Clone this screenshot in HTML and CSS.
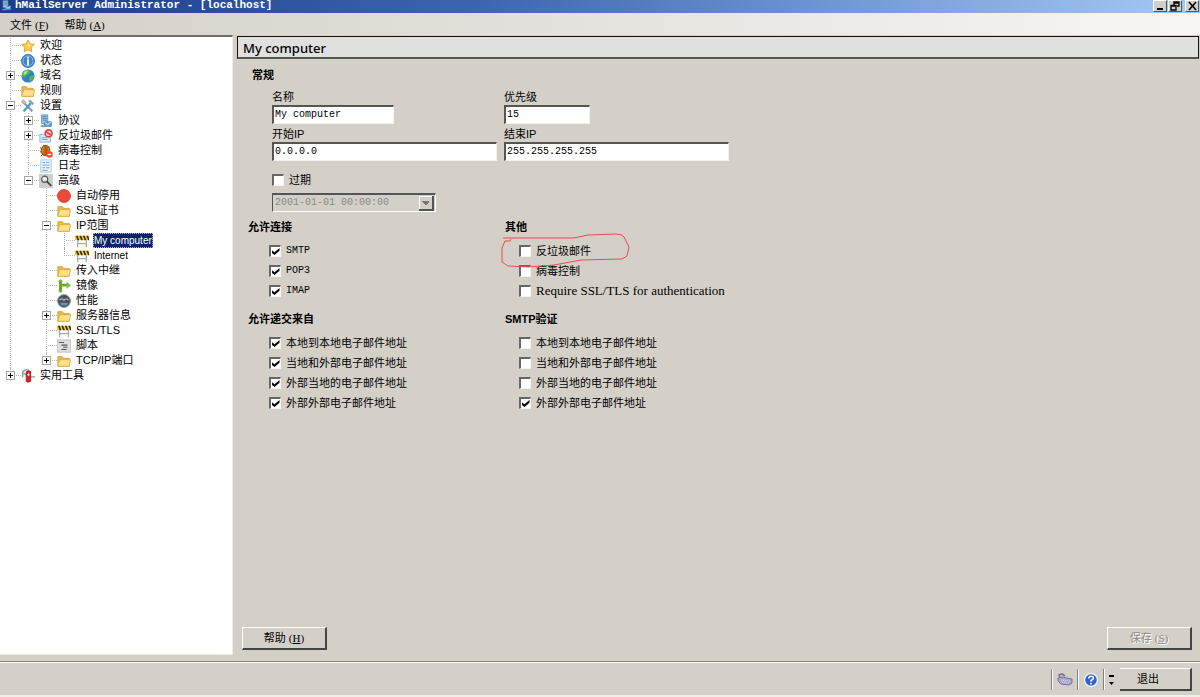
FILE: index.html
```html
<!DOCTYPE html>
<html lang="zh-CN">
<head>
<meta charset="utf-8">
<title>hMailServer Administrator - [localhost]</title>
<link rel="stylesheet" href="styles.css">
</head>
<body>
<svg class="sprite" aria-hidden="true">
  <symbol id="star" viewBox="0 0 16 16"><path d="M8 1l2.200 4.600 5 .6-3.700 3.500 1 5L8 12.200l-4.500 2.500 1-5L.8 6.200l5-.6z" fill="#fbd04e" stroke="#dd9a2c"/><path d="M8 3.500l1.200 3 3 .5-4 1z" fill="#fff0a8"/></symbol>
  <symbol id="info" viewBox="0 0 16 16"><circle cx="8" cy="8" r="7.400" fill="#3d86cb" stroke="#2a68ab"/><circle cx="8" cy="8" r="5.800" fill="none" stroke="#a8d0f2" stroke-width=".8"/><path d="M7 3h2v2H7zM7 6h2v7H7z" fill="#fff"/></symbol>
  <symbol id="globe" viewBox="0 0 16 16"><circle cx="8" cy="8" r="7.500" fill="#2d7fd0"/><path d="M2 4Q5 0 9 1l2 2-2 3-3 1-1 3-3-1-1-3zM10 8l4-1 1 2-2 4-3 1-1-3z" fill="#55b64a"/><path d="M3 4q3-3 5-2L6 5 3 7z" fill="#b5e58c"/></symbol>
  <symbol id="folder" viewBox="0 0 16 16"><path d="M1 3h5l1.500 2H14v9H1z" fill="#e9b849" stroke="#d3a23c"/><path d="M3 6.500h12.500L14 14H1z" fill="#ffe08a" stroke="#dcae45"/></symbol>
  <symbol id="tools" viewBox="0 0 16 16"><path d="M3 4l10 10" stroke="#8b98a4" stroke-width="2.400"/><path d="M1 2l2-1 3 3-2 2-3-2z" fill="#b9c3cc" stroke="#7f8d99" stroke-width=".6"/><path d="M12 4L3 14" stroke="#4b9bdc" stroke-width="2.800"/><path d="M8 2l3-1 4 4-2 2-2-2z" fill="#8fa0ad"/></symbol>
  <symbol id="server" viewBox="0 0 16 16"><path d="M3 1h7v10H3z" fill="#a9cce8" stroke="#5d8fb9"/><path d="M4 3h5M4 5h5M4 7h5" stroke="#4179aa"/><path d="M6 9h8v5H6z" fill="#6aa7da" stroke="#3f79b0"/><path d="M6 9l4 3 4-3" fill="none" stroke="#e7f4ff"/><path d="M2 14h5" stroke="#7b97ad" stroke-width="2"/></symbol>
  <symbol id="spam" viewBox="0 0 16 16"><path d="M1 6h12v9H1z" fill="#d9ecf9" stroke="#7ab0d8"/><path d="M3 10h6M3 12h7" stroke="#6aa5d4"/><circle cx="11" cy="5" r="4" fill="#f6c9c4" stroke="#d9473f" stroke-width="1.800"/><path d="M8 3l6 4" stroke="#d9473f" stroke-width="1.800"/></symbol>
  <symbol id="virus" viewBox="0 0 16 16"><path d="M1 4l3 2M1 9h3M2 14l3-3M12 3l-2 2M5 1l1 3" stroke="#6d3a12"/><ellipse cx="7.500" cy="7.500" rx="5" ry="6" fill="#d5791d" stroke="#7e430f"/><path d="M7 2v11M9 3v9" stroke="#86420f"/><circle cx="12" cy="12" r="3.700" fill="#e5502b"/><path d="M10 12h4" stroke="#fff" stroke-width="1.500"/></symbol>
  <symbol id="log" viewBox="0 0 16 16"><path d="M2 1h12v14H2z" fill="#eaf5fd" stroke="#a3c9e6"/><path d="M4 4h3M8 4h4M4 7h8M4 10h3M8 10h4M4 13h6" stroke="#5c9fd6"/></symbol>
  <symbol id="search" viewBox="0 0 16 16"><path d="M0 0h16v16H0z" fill="#cfcfcf"/><circle cx="6.500" cy="6" r="3.500" fill="#e9e9e9" stroke="#555" stroke-width="1.300"/><path d="M9 8.500l5 5" stroke="#444" stroke-width="2"/></symbol>
  <symbol id="stop" viewBox="0 0 16 16"><circle cx="8" cy="8" r="7.400" fill="#ee4a38" stroke="#d33b2c"/></symbol>
  <symbol id="barrier" viewBox="0 0 16 16"><path d="M3 7v8M13 7v8M3 11h10" stroke="#aaa" stroke-width="1.500"/><path d="M0 2h16v5H0z" fill="#f4c430"/><path d="M1 2h2l2 5H3zM5 2h2l2 5H7zM9 2h2l2 5h-2zM13 2h2l1 3v2h-1z" fill="#332d20"/></symbol>
  <symbol id="mirror" viewBox="0 0 16 16"><path d="M4 1v14M4 7h8" stroke="#69a72a" stroke-width="3.400"/><path d="M11 3l5 4-5 4zM1 3l3-3 3 3zM1 13l3 3 3-3z" fill="#80bf38"/></symbol>
  <symbol id="gauge" viewBox="0 0 16 16"><circle cx="8" cy="8" r="7.300" fill="#46515a" stroke="#8d989f"/><path d="M3 7a3 3 0 0 1 5 0 3 3 0 0 1 5 0" fill="none" stroke="#a9c7dc" stroke-width="1.300"/><path d="M5 7l1-3M10 7l2-3" stroke="#e66a51"/><path d="M3 10h10l-2 3H5z" fill="#5d93bd"/></symbol>
  <symbol id="script" viewBox="0 0 16 16"><path d="M0 1h16v14H0z" fill="#dedede" stroke="#bbb"/><path d="M2 4h6M5 7h7M7 9.500h5M5 12h6" stroke="#555" stroke-width="1.200"/></symbol>
  <symbol id="knife" viewBox="0 0 16 16"><path d="M2 9V3l3-2h4M3 5l4 2M10 9h6" fill="none" stroke="#8d9899" stroke-width="1.600"/><path d="M6 3q3-2 5 0v11q-3 2-5 0z" fill="#d6252b" stroke="#a3161c"/><path d="M8.500 5v3M7 6.500h3" stroke="#fff"/></symbol>
  <symbol id="plug" viewBox="0 0 16 16"><path d="M3 6l-1-3 3-1 3 2" fill="none" stroke="#77739b" stroke-width="1.600"/><path d="M1 6l4-1 10 2v4l-3 2-8-1-3-3z" fill="#aaa6cf" stroke="#77739b"/><path d="M4 8l9 1M5 10l7 1" stroke="#dddaf0" stroke-dasharray="1 1"/></symbol>
</svg>

<header class="titlebar">
  <svg class="title-icon"><use href="#server"/></svg>
  <h1>hMailServer Administrator - [localhost]</h1>
  <div class="window-buttons">
    <button type="button" aria-label="最小化"><svg viewBox="0 0 12 10"><path d="M3 8h6" stroke="#000" stroke-width="2"/></svg></button>
    <button type="button" aria-label="还原"><svg viewBox="0 0 12 10"><path d="M5 4V1h5v4H8M5 2h5M2 4.500h5V9H2zM2 5h5" fill="none" stroke="#000" stroke-width="1.300"/></svg></button>
    <button type="button" class="close" aria-label="关闭"><svg viewBox="0 0 12 10"><path d="M3 1l7 8M10 1L3 9" stroke="#000" stroke-width="1.600"/></svg></button>
  </div>
</header>

<nav class="menubar">
  <button type="button">文件<span class="key">(<u>F</u>)</span></button>
  <button type="button">帮助<span class="key">(<u>A</u>)</span></button>
</nav>

<div class="workspace">
  <aside class="tree-pane">
    <ul class="tree">
      <li><div class="node"><svg><use href="#star"/></svg><span>欢迎</span></div></li>
      <li><div class="node"><svg><use href="#info"/></svg><span>状态</span></div></li>
      <li><div class="node"><button class="toggle plus" aria-label="展开"></button><svg><use href="#globe"/></svg><span>域名</span></div></li>
      <li><div class="node"><svg><use href="#folder"/></svg><span>规则</span></div></li>
      <li><div class="node"><button class="toggle" aria-label="折叠"></button><svg><use href="#tools"/></svg><span>设置</span></div>
        <ul>
          <li><div class="node"><button class="toggle plus" aria-label="展开"></button><svg><use href="#server"/></svg><span>协议</span></div></li>
          <li><div class="node"><button class="toggle plus" aria-label="展开"></button><svg><use href="#spam"/></svg><span>反垃圾邮件</span></div></li>
          <li><div class="node"><svg><use href="#virus"/></svg><span>病毒控制</span></div></li>
          <li><div class="node"><svg><use href="#log"/></svg><span>日志</span></div></li>
          <li><div class="node"><button class="toggle" aria-label="折叠"></button><svg><use href="#search"/></svg><span>高级</span></div>
            <ul>
              <li><div class="node"><svg><use href="#stop"/></svg><span>自动停用</span></div></li>
              <li><div class="node"><svg><use href="#folder"/></svg><span>SSL证书</span></div></li>
              <li><div class="node"><button class="toggle" aria-label="折叠"></button><svg><use href="#folder"/></svg><span>IP范围</span></div>
                <ul class="ranges">
                  <li><div class="node"><svg><use href="#barrier"/></svg><span class="selected">My computer</span></div></li>
                  <li><div class="node"><svg><use href="#barrier"/></svg><span>Internet</span></div></li>
                </ul>
              </li>
              <li><div class="node"><svg><use href="#folder"/></svg><span>传入中继</span></div></li>
              <li><div class="node"><svg><use href="#mirror"/></svg><span>镜像</span></div></li>
              <li><div class="node"><svg><use href="#gauge"/></svg><span>性能</span></div></li>
              <li><div class="node"><button class="toggle plus" aria-label="展开"></button><svg><use href="#folder"/></svg><span>服务器信息</span></div></li>
              <li><div class="node"><svg><use href="#barrier"/></svg><span>SSL/TLS</span></div></li>
              <li><div class="node"><svg><use href="#script"/></svg><span>脚本</span></div></li>
              <li><div class="node"><button class="toggle plus" aria-label="展开"></button><svg><use href="#folder"/></svg><span>TCP/IP端口</span></div></li>
            </ul>
          </li>
        </ul>
      </li>
      <li><div class="node"><button class="toggle plus" aria-label="展开"></button><svg><use href="#knife"/></svg><span>实用工具</span></div></li>
    </ul>
  </aside>

  <main class="content">
    <h2 class="page-title">My computer</h2>
    <form class="form">
      <section class="general">
        <h3>常规</h3>
        <div class="fields">
          <div class="field"><label for="name">名称</label><input id="name" class="text medium" type="text" value="My computer"></div>
          <div class="field"><label for="priority">优先级</label><input id="priority" class="text short" type="text" value="15"></div>
          <div class="field"><label for="lower">开始IP</label><input id="lower" class="text" type="text" value="0.0.0.0"></div>
          <div class="field"><label for="upper">结束IP</label><input id="upper" class="text" type="text" value="255.255.255.255"></div>
        </div>
        <div class="expiry">
          <label class="check"><input type="checkbox"><span>过期</span></label>
          <select disabled aria-label="过期时间"><option>2001-01-01 00:00:00</option></select>
        </div>
      </section>

      <div class="groups">
        <section class="group">
          <h3>允许连接</h3>
          <label class="check"><input type="checkbox" checked><span class="mono">SMTP</span></label>
          <label class="check"><input type="checkbox" checked><span class="mono">POP3</span></label>
          <label class="check"><input type="checkbox" checked><span class="mono">IMAP</span></label>
        </section>
        <section class="group">
          <h3>其他</h3>
          <label class="check"><input type="checkbox"><span>反垃圾邮件</span></label>
          <label class="check"><input type="checkbox"><span>病毒控制</span></label>
          <label class="check"><input type="checkbox"><span class="serif">Require SSL/TLS for authentication</span></label>
          <svg class="annotation" viewBox="0 0 132 38" aria-hidden="true"><path d="M4 5h71l14-3 28-1q6 0 8 3l5 10-2 9-5 3-41 1-27 5-26 2-20-1-6-4v-14l3-7 5 0 1-2" fill="none" stroke="#e0504c"/></svg>
        </section>
        <section class="group">
          <h3>允许递交来自</h3>
          <label class="check"><input type="checkbox" checked><span>本地到本地电子邮件地址</span></label>
          <label class="check"><input type="checkbox" checked><span>当地和外部电子邮件地址</span></label>
          <label class="check"><input type="checkbox" checked><span>外部当地的电子邮件地址</span></label>
          <label class="check"><input type="checkbox" checked><span>外部外部电子邮件地址</span></label>
        </section>
        <section class="group">
          <h3>SMTP验证</h3>
          <label class="check"><input type="checkbox"><span>本地到本地电子邮件地址</span></label>
          <label class="check"><input type="checkbox"><span>当地和外部电子邮件地址</span></label>
          <label class="check"><input type="checkbox"><span>外部当地的电子邮件地址</span></label>
          <label class="check"><input type="checkbox" checked><span>外部外部电子邮件地址</span></label>
        </section>
      </div>

      <div class="actions">
        <button type="button" class="push">帮助<span class="key">(<u>H</u>)</span></button>
        <button type="button" class="push" disabled>保存<span class="key">(<u>S</u>)</span></button>
      </div>
    </form>
  </main>
</div>

<footer class="statusbar">
  <div class="tray"><svg viewBox="0 0 16 16"><use href="#plug"/></svg></div>
  <div class="tray"><svg viewBox="0 0 16 16"><circle cx="8" cy="8" r="6.500" fill="#2f62cf" stroke="#e8effc" stroke-width="1.500"/><path d="M5.800 6.500q0-2.300 2.300-2.300t2.200 2q0 1.200-2.200 2.300v1M8 10.800v1.600" fill="none" stroke="#fff" stroke-width="1.600"/></svg></div>
  <div class="tray overflow"><svg viewBox="0 0 8 16"><path d="M1 3h5v2H1zM1 10h5l-2.500 3z" fill="#000"/></svg></div>
  <button type="button" class="push exit">退出</button>
</footer>
</body>
</html>
```

FILE: styles.css
```css
* { box-sizing: border-box; }

body {
  margin: 0;
  min-height: 100vh;
  display: flex;
  flex-direction: column;
  background: #d4d0c8;
  color: #000;
  font: 11px/16px "Liberation Sans", "Noto Sans CJK SC", sans-serif;
}

h1, h2, h3, ul { margin: 0; padding: 0; }
ul { list-style: none; }
button, input, select { font: inherit; color: inherit; margin: 0; border-radius: 0; }
.sprite { position: absolute; width: 0; height: 0; }
.mono { font-family: "Liberation Mono", monospace; font-size: 10px; }
.serif { font-family: "Liberation Serif", serif; font-size: 13px; }
.key { margin-left: 3px; font-family: "Liberation Serif", serif; }

/* Title bar */
.titlebar {
  display: flex;
  align-items: flex-start;
  height: 13px;
  overflow: hidden;
  background: linear-gradient(90deg, #1d3b88, #3c66b0 40%, #a6caf5);
}
.title-icon { width: 13px; height: 11px; margin-right: 2px; }
.titlebar h1 {
  flex: 1;
  color: #fff;
  font: bold 11px/11px "Liberation Mono", monospace;
}
.window-buttons { display: flex; gap: 1px; padding-right: 1px; }
.window-buttons button {
  width: 14px;
  height: 12px;
  padding: 0;
  background: #d4d0c8;
  border: 1px solid;
  border-color: #fff #555 #555 #fff;
}
.window-buttons svg { display: block; width: 12px; height: 10px; }
.window-buttons .close { margin-left: 2px; }

/* Menu bar */
.menubar {
  display: flex;
  gap: 16px;
  height: 22px;
  padding: 2px 0 0 10px;
  background: linear-gradient(90deg, #d4d0c8, #f7f6f4);
}
.menubar button { padding: 0; border: 0; background: none; }

/* Tree */
.workspace { flex: 1; display: flex; gap: 4px; }
.tree-pane {
  width: 233px;
  margin-bottom: 6px;
  padding-top: 1px;
  background: #fff;
  border-top: 2px solid #6e6e6e;
  border-right: 1px solid #eeece6;
  border-bottom: 1px solid #eeece6;
}
.tree ul { padding-left: 18px; }
.tree li { position: relative; }
.tree li::before {
  content: "";
  position: absolute;
  left: 10px;
  top: 0;
  bottom: 0;
  border-left: 1px dotted #b8b8b8;
}
.tree li:last-child::before { bottom: auto; height: 8px; }
.node {
  display: grid;
  grid-template-columns: 21px 14px 1fr;
  align-items: center;
  height: 15px;
  white-space: nowrap;
}
.node::before {
  content: "";
  grid-area: 1 / 1;
  margin-left: 12px;
  border-top: 1px dotted #b8b8b8;
}
.node svg { grid-area: 1 / 2; width: 14px; height: 14px; }
.node span { grid-area: 1 / 3; justify-self: start; margin-left: 4px; padding: 0 1px; line-height: 15px; }
.ranges { font-size: 10px; }
.node .selected { background: #0a246a; color: #fff; outline: 1px dotted #d8c070; outline-offset: -1px; }
.toggle {
  grid-area: 1 / 1;
  justify-self: center;
  z-index: 1;
  width: 9px;
  height: 9px;
  padding: 0;
  border: 1px solid #a5a5a5;
  background: linear-gradient(#000, #000) center / 5px 1px no-repeat, #fff;
}
.toggle.plus {
  background: linear-gradient(#000, #000) center / 5px 1px no-repeat,
    linear-gradient(#000, #000) center / 1px 5px no-repeat, #fff;
}

/* Content */
.content { flex: 1; display: flex; flex-direction: column; padding-top: 1px; }
.page-title {
  height: 23px;
  margin-right: 1px;
  padding-left: 5px;
  border: 1px solid #111;
  border-bottom: 2px solid #55574c;
  background: #e0e0de;
  font: 500 13px/23px "Noto Sans", sans-serif;
}
.form { flex: 1; display: flex; flex-direction: column; padding: 8px 8px 11px 5px; }
h3 { font-size: 11px; line-height: 16px; font-weight: bold; }
.general { padding-left: 10px; }
.fields {
  display: grid;
  grid-template-columns: 225px 225px;
  gap: 2px 7px;
  padding: 6px 0 0 20px;
}
.field label { display: block; }
.text {
  display: block;
  width: 100%;
  height: 19px;
  padding: 0 1px 2px;
  border: 1px solid;
  border-color: #555 #f4f2ee #f4f2ee #555;
  border-top-width: 2px;
  border-left-width: 2px;
  background: #fff;
  font: 10px/14px "Liberation Mono", monospace;
}
.medium { width: 122px; }
.short { width: 86px; }
.expiry { display: flex; flex-direction: column; align-items: flex-start; gap: 5px; padding: 11px 0 0 20px; }
.expiry .check { height: 16px; }
select {
  appearance: none;
  width: 164px;
  height: 19px;
  padding: 0 2px;
  border: 1px solid;
  border-color: #555 #fff #fff #555;
  border-top-width: 2px;
  background:
    conic-gradient(from -45deg at 50% 100%, #777 25%, transparent 0) right 5px top 6px / 8px 4px no-repeat,
    linear-gradient(#d4d0c8, #d4d0c8) right 3px top 2px / 12px 12px no-repeat,
    linear-gradient(#fff, #fff) right 3px top 1px / 13px 13px no-repeat,
    linear-gradient(#555, #555) right 1px top 1px / 15px 15px no-repeat,
    #d4d0c8;
  font: 10px/14px "Liberation Mono", monospace;
}
select:disabled { color: #888; opacity: 1; }

.check { display: flex; align-items: center; gap: 5px; height: 20px; }
.check input {
  appearance: none;
  display: grid;
  place-items: center;
  width: 12px;
  height: 12px;
  border: 1px solid;
  border-color: #666 #f6f4f0 #f6f4f0 #666;
  border-top-width: 2px;
  border-left-width: 2px;
  background: #fff;
}
.check input:checked::before {
  content: "";
  width: 8px;
  height: 7px;
  background: #000;
  clip-path: polygon(0 30%, 38% 62%, 100% 0, 100% 40%, 38% 100%, 0 68%);
}
.groups {
  display: grid;
  grid-template-columns: 250px 250px;
  row-gap: 10px;
  padding: 7px 0 0 6px;
}
.group { position: relative; display: flex; flex-direction: column; align-items: flex-start; }
.group h3 { margin-bottom: 6px; }
.group .check { margin-left: 21px; white-space: nowrap; }
.group:nth-child(even) h3 { margin-left: 7px; }
.annotation { position: absolute; left: 1px; top: 14px; width: 132px; height: 38px; pointer-events: none; }

.actions { display: flex; justify-content: space-between; margin-top: auto; }
.push {
  width: 85px;
  height: 23px;
  padding: 0;
  border: 1px solid;
  border-color: #fff #444 #444 #fff;
  border-right-width: 2px;
  border-bottom-width: 2px;
  background: #d4d0c8;
}
.push:disabled { color: #8c8982; text-shadow: 1px 1px #fff; }

/* Status bar */
.statusbar {
  display: flex;
  align-items: center;
  justify-content: flex-end;
  height: 36px;
  padding: 2px 8px 0 0;
  border-top: 1px solid #808080;
  border-bottom: 2px solid #f0eee9;
  box-shadow: inset 0 1px #fff;
}
.tray {
  display: flex;
  align-items: center;
  justify-content: center;
  width: 26px;
  height: 21px;
  border-left: 1px solid #808080;
  box-shadow: inset 1px 0 #fff;
}
.tray svg { width: 16px; height: 16px; }
.overflow { width: 17px; }
.overflow svg { width: 8px; }
.exit { width: 72px; padding-right: 14px; border-left-width: 0; }
```
